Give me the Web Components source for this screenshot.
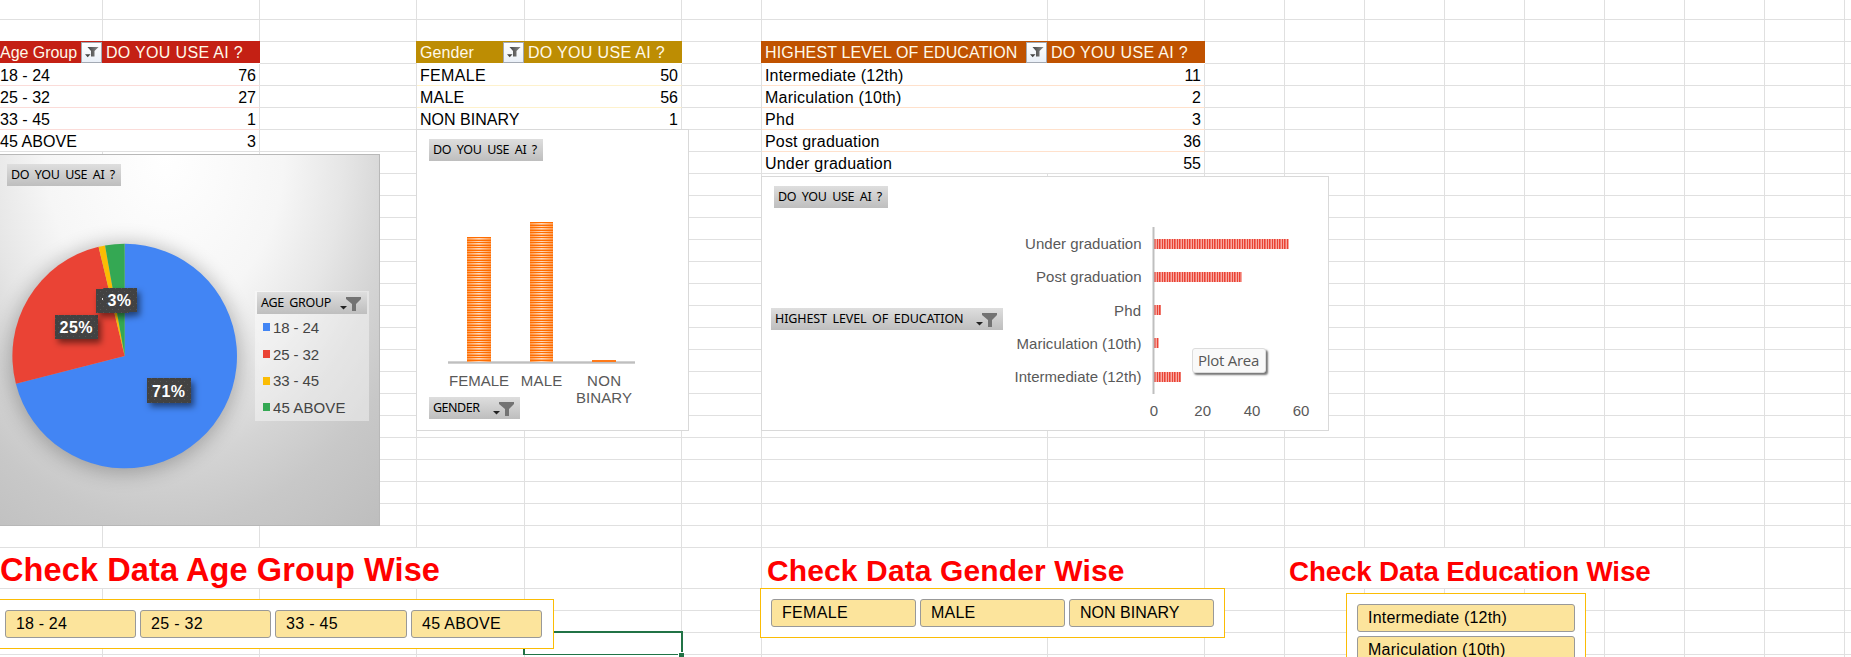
<!DOCTYPE html>
<html lang="en">
<head>
<meta charset="utf-8">
<title>AI usage survey</title>
<style>
html,body{margin:0;height:100%;overflow:hidden;background:#fff}
body{font-family:"Liberation Sans",Arial,sans-serif;font-size:16px;color:#000}
</style>
</head>
<body>
<survey-sheet></survey-sheet>
<script>
const define = (name, html, init) => {
  const t = document.createElement('template');
  t.innerHTML = html;
  customElements.define(name, class extends HTMLElement {
    constructor() {
      super();
      this.attachShadow({ mode: 'open' }).append(t.content.cloneNode(true));
    }
    connectedCallback() { if (init) init.call(this, this.shadowRoot); }
  });
};

/* Text tracked so that its advance equals the "w" attribute. */
define('fit-text', `<style>:host{display:inline-block;white-space:pre}</style><slot></slot>`, function () {
  const w = +this.getAttribute('w'), n = this.textContent.length;
  if (!w) return;
  const natural = this.getBoundingClientRect().width;
  this.style.letterSpacing = ((w - natural) / n) + 'px';
});

/* Filter button in a table header. */
define('filter-toggle', `<style>
:host{display:block;box-sizing:border-box;width:21px;height:21px;border:1px solid #a3a9b3;background:linear-gradient(#fff,#eaf0f8)}
svg{display:block}
</style><svg width="19" height="19" viewBox="0 0 19 19"><defs><linearGradient id="f"><stop offset="0" stop-color="#444"/><stop offset="1" stop-color="#8a8a8a"/></linearGradient></defs>
<path d="M5.5 4H16.6L12.500 8V13.5H9V8Z" fill="url(#f)"/><path d="M3 11.3H8.500L5.700 14.200Z" fill="#444"/></svg>`);

/* Header and value cells of a pivot table. */
define('table-head', `<style>
:host{display:flex;align-items:center;margin:-1px 0 0 -1px;height:22px;box-sizing:border-box;padding:2px 1px 0 4px;line-height:20px;color:#fff9ea;background:var(--fill);position:relative;white-space:pre}
filter-toggle{margin:-1px 0 0 auto;align-self:flex-start}
:host(:not([filter])) filter-toggle{display:none}
</style><slot></slot><filter-toggle></filter-toggle>`);

define('table-cell', `<style>
:host{display:block;height:22px;box-sizing:border-box;padding:1px 3px 0;line-height:22px;border-bottom:1px solid var(--rule,#e0e0e0);white-space:pre}
:host([num]){text-align:right;border-right:1px solid #e0e0e0}
</style><slot></slot>`);

/* Grey pivot field button on a chart. */
define('field-button', `<style>
:host{display:flex;box-sizing:border-box;height:22px;padding:0 0 0 4px;font:12.5px/22px "Noto Sans","Open Sans",sans-serif;word-spacing:2.5px;color:#000;background:linear-gradient(#dedede,#bebebe)}
svg{margin:0 6px 0 auto;display:block}
:host(:not([filter])) svg{display:none}
</style><slot></slot><svg width="22" height="22"><path d="M7 5H22V7L17 12V19H13V12L7 7Z" fill="#737373"/><path d="M1 14H8L4.500 17.500Z" fill="#222"/></svg>`);

define('slicer-button', `<style>
:host{display:block;box-sizing:border-box;height:28px;padding-left:10px;line-height:26px;border:1px solid #999;border-radius:3px;background:#fce49c;white-space:pre}
</style><slot></slot>`);

define('slicer-panel', `<style>
:host{display:grid;gap:4px;box-sizing:border-box;border:1px solid #fbbc04;background:#fff}
</style><slot></slot>`);

define('section-title', `<style>
:host{display:block;height:41px;box-sizing:border-box;color:#f00;font-weight:bold;line-height:41px;white-space:nowrap;border-bottom:1px solid #e0e0e0}
</style><slot></slot>`);

/* Pie chart by age group. */
define('age-chart', `<style>
:host{display:block;box-sizing:border-box;border:1px solid #b8b8b8;border-left:0;background:radial-gradient(ellipse 330px 440px at 165px 0,#fff 0,#f6f6f6 36%,#e6e6e6 54%,#d4d4d4 69%,#c8c8c8 84%,#bcbcbc 110%)}
svg{position:absolute;left:0;top:0;overflow:hidden}
.top{position:absolute;left:7px;top:9px;width:114px}
.legend{position:absolute;left:255px;top:136px;width:114px;height:130px;box-sizing:border-box;padding:1px 2px 0;background:rgba(255,255,255,.4)}
ul{list-style:none;margin:0;padding:0 0 0 6px;color:#444;font-size:15px}
li{display:flex;align-items:center;gap:3px;height:26.7px}
li:before{content:"";width:7px;height:8px;background:var(--c)}
</style>
<svg width="379" height="370" font-family="Liberation Sans" font-size="16" font-weight="bold" fill="#fff">
<defs><filter id="s" x="-30%" y="-30%" width="160%" height="160%"><feGaussianBlur stdDeviation="10"/></filter>
<filter id="d" x="-20%" y="-30%" width="160%" height="190%"><feDropShadow dx="3" dy="4" stdDeviation="3" flood-opacity=".5"/></filter>
<pattern id="p" width="6" height="6" patternUnits="userSpaceOnUse"><path fill="#424242" d="M0 0h6v6H0z"/><path fill="#525252" d="M1 1h1v1H1zM4 4h1v1H4z"/></pattern></defs>
<circle cx="124.700" cy="203" r="115" fill="#000" opacity=".25" filter="url(#s)"/>
<g id="slices"></g>
<g filter="url(#d)"><rect x="147" y="223" width="44" height="25" fill="url(#p)"/></g>
<g filter="url(#d)"><rect x="55" y="160" width="43" height="24" fill="url(#p)"/></g>
<g filter="url(#d)"><path d="M96 134h7v-1h34v24h-8v1H96z" fill="url(#p)"/></g>
<path d="M102 143h1v2h-1z" fill="#ddd"/>
<text x="152" y="242" textLength="33">71%</text><text x="59.500" y="178" textLength="33">25%</text><text x="107.500" y="151" textLength="23.500">3%</text>
</svg>
<field-button class="top"><fit-text w="104">DO YOU USE AI ?</fit-text></field-button>
<div class="legend"><field-button filter><fit-text w="70">AGE GROUP</fit-text></field-button>
<ul><li style="--c:#4285f4"><fit-text w="46">18 - 24</fit-text></li><li style="--c:#ea4335"><fit-text w="46">25 - 32</fit-text></li><li style="--c:#fbbc04"><fit-text w="46">33 - 45</fit-text></li><li style="--c:#34a853"><fit-text w="72.500">45 ABOVE</fit-text></li></ul></div>`,
function (root) {
  const data = [[76, '#4285f4'], [27, '#ea4335'], [1, '#fbbc04'], [3, '#34a853']];
  const cx = 124.7, cy = 201, r = 112.3;
  let a = 0;
  root.getElementById('slices').innerHTML = data.map(([n, c]) => {
    const b = a + n / 107 * 2 * Math.PI;
    const at = t => `${cx + r * Math.sin(t)} ${cy - r * Math.cos(t)}`;
    const d = `M${cx} ${cy}L${at(a)}A${r} ${r} 0 ${b - a > Math.PI ? 1 : 0} 1 ${at(b)}Z`;
    a = b;
    return `<path d="${d}" fill="${c}"/>`;
  }).join('');
});

/* Column chart by gender. */
define('gender-chart', `<style>
:host{display:block;box-sizing:border-box;border:1px solid #d9d9d9;background:#fff}
svg{display:block}
field-button{position:absolute;left:12px}
.top{top:9px;width:114px}.bottom{top:267px;width:91px}
</style>
<svg width="271" height="300" font-family="Liberation Sans" font-size="15" fill="#595959" text-anchor="middle">
<defs><linearGradient id="g"><stop offset="0" stop-color="#ff9a4d"/><stop offset=".5" stop-color="#ffd9bb"/><stop offset="1" stop-color="#ff9a4d"/></linearGradient>
<pattern id="h" width="24" height="5" patternUnits="userSpaceOnUse"><path fill="#ff6d01" d="M0 0h24v1H0zM0 2h24v1H0z"/><path fill="#ff6d01" opacity=".35" d="M0 4h24v1H0z"/></pattern></defs>
<path d="M31 232.500H218" stroke="#d2d2d2" stroke-width="3"/><path d="M31 232.500H218" stroke="#bfbfbf"/>
<g fill="url(#g)"><rect x="50" y="107" width="24" height="125"/><rect x="113" y="92" width="23" height="140"/></g>
<g fill="url(#h)"><rect x="50" y="107" width="24" height="125"/><rect x="113" y="92" width="23" height="140"/></g>
<path d="M175 230h24v2h-24z" fill="#ff7a1a"/>
<text x="62" y="256" textLength="60">FEMALE</text><text x="124.500" y="256" textLength="41.500">MALE</text><text x="187" y="256" textLength="34">NON</text><text x="187" y="273" textLength="56">BINARY</text>
</svg>
<field-button class="top"><fit-text w="104">DO YOU USE AI ?</fit-text></field-button>
<field-button class="bottom" filter><fit-text w="46.500">GENDER</fit-text></field-button>`);

/* Bar chart by education level, with the hover tooltip of its plot area. */
define('education-chart', `<style>
:host{display:block;box-sizing:border-box;border:1px solid #d9d9d9;background:#fff}
svg{display:block}
field-button,.tip{position:absolute}
.top{left:12px;top:9px;width:114px}.side{left:9px;top:131px;width:232px}
.tip{left:430px;top:171px;width:74px;height:25px;box-sizing:border-box;padding-left:5px;border:1px solid #dcdcdc;border-radius:3px;background:#f9f9f9;color:#575757;font:15px/23px "Open Sans",sans-serif;box-shadow:2px 2px 2px #777}
</style>
<svg width="566" height="253" font-family="Liberation Sans" font-size="15" fill="#595959">
<defs><pattern id="v" width="5" height="10" patternUnits="userSpaceOnUse"><path fill="#f8a8a0" d="M0 0h5v10H0z"/><path fill="#ea4335" d="M0 0h1v10H0zM2 0h1v10H2z"/><path fill="#f0766c" d="M3 0h1v10H3z"/></pattern></defs>
<g fill="url(#v)"><path d="M392 62h135v10H392zM392 95h88v10h-88zM392 128h7v10h-7zM392 161h5v10h-5zM392 195h27v10h-27z"/></g>
<path d="M391.500 50v167" stroke="#bfbfbf" stroke-width="2"/>
<g text-anchor="end"><text x="379.500" y="72" textLength="116.500">Under graduation</text><text x="379.500" y="105" textLength="105.500">Post graduation</text><text x="379" y="139" textLength="27">Phd</text><text x="379.500" y="172" textLength="125">Mariculation (10th)</text><text x="379.500" y="205" textLength="127">Intermediate (12th)</text></g>
<g text-anchor="middle"><text x="392" y="239">0</text><text x="440.700" y="239">20</text><text x="490" y="239">40</text><text x="539" y="239">60</text></g>
</svg>
<field-button class="top"><fit-text w="104">DO YOU USE AI ?</fit-text></field-button>
<field-button class="side" filter><fit-text w="188.500">HIGHEST LEVEL OF EDUCATION</fit-text></field-button>
<div class="tip"><fit-text w="61">Plot Area</fit-text></div>`);

/* The worksheet: gridlines and cells in a grid, with the floating objects laid over it. */
define('survey-sheet', `<style>
:host{display:block;position:relative;width:1851px;height:657px;overflow:hidden;background:#fff}
.grid{display:grid;grid-template-columns:103px 157px 157px 108px 157px 80px 286px 157px repeat(8,80px) 80px;grid-template-rows:20px repeat(24,22px) 41px repeat(4,22px)}
.blank{border-right:1px solid #e0e0e0;border-bottom:1px solid #e0e0e0}
.float{position:absolute}
.selection{left:523px;top:631px;width:160px;height:24px;box-sizing:border-box;border:2px solid #217346;border-bottom-width:1px}
.selection:after{content:"";position:absolute;right:-3px;bottom:-3px;width:5px;height:4px;background:#217346;border:solid #fff;border-width:1px 0 0 1px}
</style>
<div class="grid"></div>
<div class="float selection"></div>
<age-chart class="float" style="left:0;top:154px;width:380px;height:372px"></age-chart>
<gender-chart class="float" style="left:416px;top:129px;width:273px;height:302px"></gender-chart>
<education-chart class="float" style="left:761px;top:176px;width:568px;height:255px"></education-chart>
<slicer-panel class="float" style="left:-6px;top:599px;width:560px;height:50px;padding:10px;grid-template-columns:131px 131px 132px 131px">
<slicer-button><fit-text w="51">18 - 24</fit-text></slicer-button><slicer-button><fit-text w="52">25 - 32</fit-text></slicer-button><slicer-button><fit-text w="52">33 - 45</fit-text></slicer-button><slicer-button><fit-text w="79">45 ABOVE</fit-text></slicer-button></slicer-panel>
<slicer-panel class="float" style="left:760px;top:588px;width:465px;height:50px;padding:10px;grid-template-columns:repeat(3,145px)">
<slicer-button><fit-text w="66">FEMALE</fit-text></slicer-button><slicer-button><fit-text w="44.500">MALE</fit-text></slicer-button><slicer-button><fit-text w="99.500">NON BINARY</fit-text></slicer-button></slicer-panel>
<slicer-panel class="float" style="left:1346px;top:593px;width:240px;height:120px;padding:10px;grid-template-columns:218px;align-content:start">
<slicer-button><fit-text w="139">Intermediate (12th)</fit-text></slicer-button><slicer-button><fit-text w="137.500">Mariculation (10th)</fit-text></slicer-button></slicer-panel>`,
function (root) {
  const grid = root.querySelector('.grid');
  const taken = new Set();
  const html = [];
  const put = (tag, row, col, span, attrs, css, body) => {
    for (let i = 0; i < span; i++) taken.add(row + ':' + (col + i));
    html.push(`<${tag} ${attrs} style="grid-area:${row}/${col}/auto/span ${span};${css}">${body}</${tag}>`);
  };
  const text = ([s, w]) => w ? `<fit-text w="${w}">${s}</fit-text>` : s;
  const table = (col, fill, rule, head, rows, edge = false) => {
    put('table-head', 3, col, 1, 'filter', `--fill:${fill};${edge ? 'padding-left:1px;' : ''}`, text(head));
    put('table-head', 3, col + 1, 1, '', `--fill:${fill};`, text(['DO YOU USE AI ?', 137]));
    rows.forEach(([label, value, w], i) => {
      const css = i < rows.length - 1 ? `--rule:${rule};` : '';
      put('table-cell', 4 + i, col, 1, '', css + (edge ? 'padding-left:0;' : ''), text([label, w]));
      put('table-cell', 4 + i, col + 1, 1, 'num', css, value);
    });
  };
  table(1, '#c42014', '#fbdcd9', ['Age Group', 77], [['18 - 24', 76, 50], ['25 - 32', 27, 50], ['33 - 45', 1, 50], ['45 ABOVE', 3, 77]], true);
  table(4, '#bd8d03', '#fef2cd', ['Gender', 54], [['FEMALE', 50, 66], ['MALE', 56, 44.5], ['NON BINARY', 1, 99.5]]);
  table(7, '#c05200', '#ffe1cc', ['HIGHEST LEVEL OF EDUCATION', 252.5], [['Intermediate (12th)', 11, 138.5], ['Mariculation (10th)', 2, 136.5], ['Phd', 3, 29.5], ['Post graduation', 36, 114.5], ['Under graduation', 55, 127]]);
  put('section-title', 26, 1, 4, '', 'font-size:32.5px;padding-top:2px;border-right:1px solid #e0e0e0', text(['Check Data Age Group Wise', 440]));
  put('section-title', 26, 7, 2, '', 'font-size:30px;padding-top:2px;padding-left:5px;border-right:1px solid #e0e0e0', text(['Check Data Gender Wise', 357.5]));
  put('section-title', 26, 10, 5, '', 'font-size:27.8px;padding-top:3px;padding-left:4px;border-right:1px solid #e0e0e0', text(['Check Data Education Wise', 361.5]));
  for (let r = 1; r <= 30; r++)
    for (let c = 1; c <= 17; c++)
      if (!taken.has(r + ':' + c)) html.push(`<div class="blank" style="grid-area:${r}/${c}"></div>`);
  grid.innerHTML = html.join('');
});
</script>
</body>
</html>
